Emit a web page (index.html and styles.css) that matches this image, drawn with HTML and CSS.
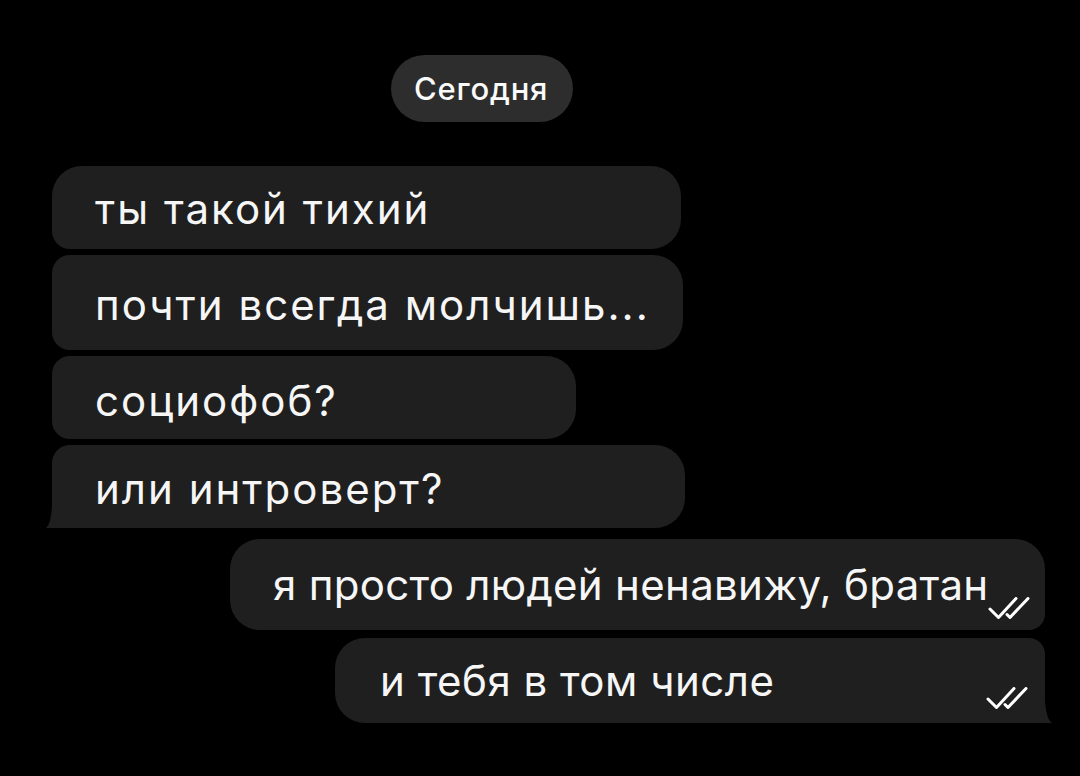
FILE: index.html
```html
<!DOCTYPE html>
<html lang="ru">
<head>
<meta charset="utf-8">
<title>Чат</title>
<link rel="stylesheet" href="styles.css">
</head>
<body>
<main class="chat">
  <div class="date-row">
    <span class="date-pill">Сегодня</span>
  </div>

  <section class="group group--in">
    <div class="bubble bubble--in bubble--first b1"><span class="text">ты такой тихий</span></div>
    <div class="bubble bubble--in b2"><span class="text">почти всегда молчишь...</span></div>
    <div class="bubble bubble--in b3"><span class="text">социофоб?</span></div>
    <div class="bubble bubble--in bubble--tail-left b4"><span class="text">или интроверт?</span></div>
  </section>

  <section class="group group--out">
    <div class="bubble bubble--out bubble--first b5">
      <span class="text">я просто людей ненавижу, братан</span>
      <svg class="ticks" viewBox="0 0 42 22" aria-hidden="true">
        <path d="M2 12 L10.5 20.5 L28 1.5"/>
        <path d="M19 17.5 L22 20.5 L40 1.5"/>
      </svg>
    </div>
    <div class="bubble bubble--out bubble--tail-right b6">
      <span class="text">и тебя в том числе</span>
      <svg class="ticks" viewBox="0 0 42 22" aria-hidden="true">
        <path d="M2 12 L10.5 20.5 L28 1.5"/>
        <path d="M19 17.5 L22 20.5 L40 1.5"/>
      </svg>
    </div>
  </section>
</main>
</body>
</html>
```

FILE: styles.css
```css
html, body {
  margin: 0;
  padding: 0;
  background: #000;
}

body {
  width: 1080px;
  height: 776px;
  overflow: hidden;
  font-family: "Inter", "Noto Sans", sans-serif;
  color: #f6f6f6;
}

.chat {
  display: flex;
  flex-direction: column;
  padding-top: 55px;
}

/* day separator */
.date-row {
  display: flex;
  padding-left: 391px;
  margin-bottom: 44px;
}

.date-pill {
  display: flex;
  align-items: center;
  height: 67px;
  padding: 0 25px 0 23px;
  border-radius: 34px;
  background: #2d2d2d;
  font-size: 31px;
  font-weight: 500;
  letter-spacing: 0.8px;
  color: #fafafa;
}

/* message groups */
.group {
  display: flex;
  flex-direction: column;
  gap: 6px;
}

.group--in {
  align-items: flex-start;
  padding-left: 52px;
}

.group--out {
  align-items: flex-end;
  padding-right: 35px;
  margin-top: 11px;
  gap: 8px;
}

.bubble {
  position: relative;
  display: flex;
  align-items: center;
  box-sizing: border-box;
  background: #1f1f1f;
  font-size: 42px;
  line-height: 50px;
  border-radius: 30px;
}

.bubble--in {
  padding: 0 40px 0 43px;
  letter-spacing: 2px;
  border-top-left-radius: 18px;
  border-bottom-left-radius: 18px;
}

.bubble--in.bubble--first {
  border-top-left-radius: 30px;
}

.bubble--out {
  justify-content: space-between;
  padding: 0 17px 0 43px;
  border-top-right-radius: 16px;
  border-bottom-right-radius: 16px;
}

.bubble--out.bubble--first {
  border-top-right-radius: 30px;
}

.text {
  white-space: nowrap;
}

/* per-message box sizes */
.b1 { width: 629px; height: 83px; padding-top: 2px; }
.b2 { width: 631px; height: 95px; padding-top: 4px; }
.b3 { width: 524px; height: 83px; padding-top: 6px; }
.b4 { width: 633px; height: 83px; padding-top: 4px; }
.b5 { width: 815px; height: 91px; letter-spacing: 0.3px; }
.b6 { width: 710px; height: 85px; padding-left: 45px; letter-spacing: 0.5px; }

/* read receipts */
.ticks {
  flex: none;
  align-self: flex-end;
  width: 42px;
  height: 22px;
  margin-bottom: 11px;
  fill: none;
  stroke: #fff;
  stroke-width: 3;
  stroke-linecap: round;
  stroke-linejoin: round;
}

.b6 .ticks {
  margin-bottom: 14px;
}

/* bubble tails */
.bubble--tail-left {
  border-bottom-left-radius: 4px;
}

.bubble--tail-left::before,
.bubble--tail-left::after,
.bubble--tail-right::before,
.bubble--tail-right::after {
  content: "";
  position: absolute;
  bottom: 0;
  height: 26px;
}

.bubble--tail-left::before {
  left: -7px;
  width: 20px;
  background: #1f1f1f;
  border-bottom-left-radius: 2px;
}

.bubble--tail-left::after {
  left: -27px;
  width: 27px;
  background: #000;
  border-bottom-right-radius: 7px 26px;
}

.bubble--tail-right {
  border-bottom-right-radius: 4px;
}

.bubble--tail-right::before {
  right: -8px;
  width: 20px;
  background: #1f1f1f;
  border-bottom-right-radius: 2px;
}

.bubble--tail-right::after {
  right: -28px;
  width: 28px;
  background: #000;
  border-bottom-left-radius: 8px 26px;
}
```
